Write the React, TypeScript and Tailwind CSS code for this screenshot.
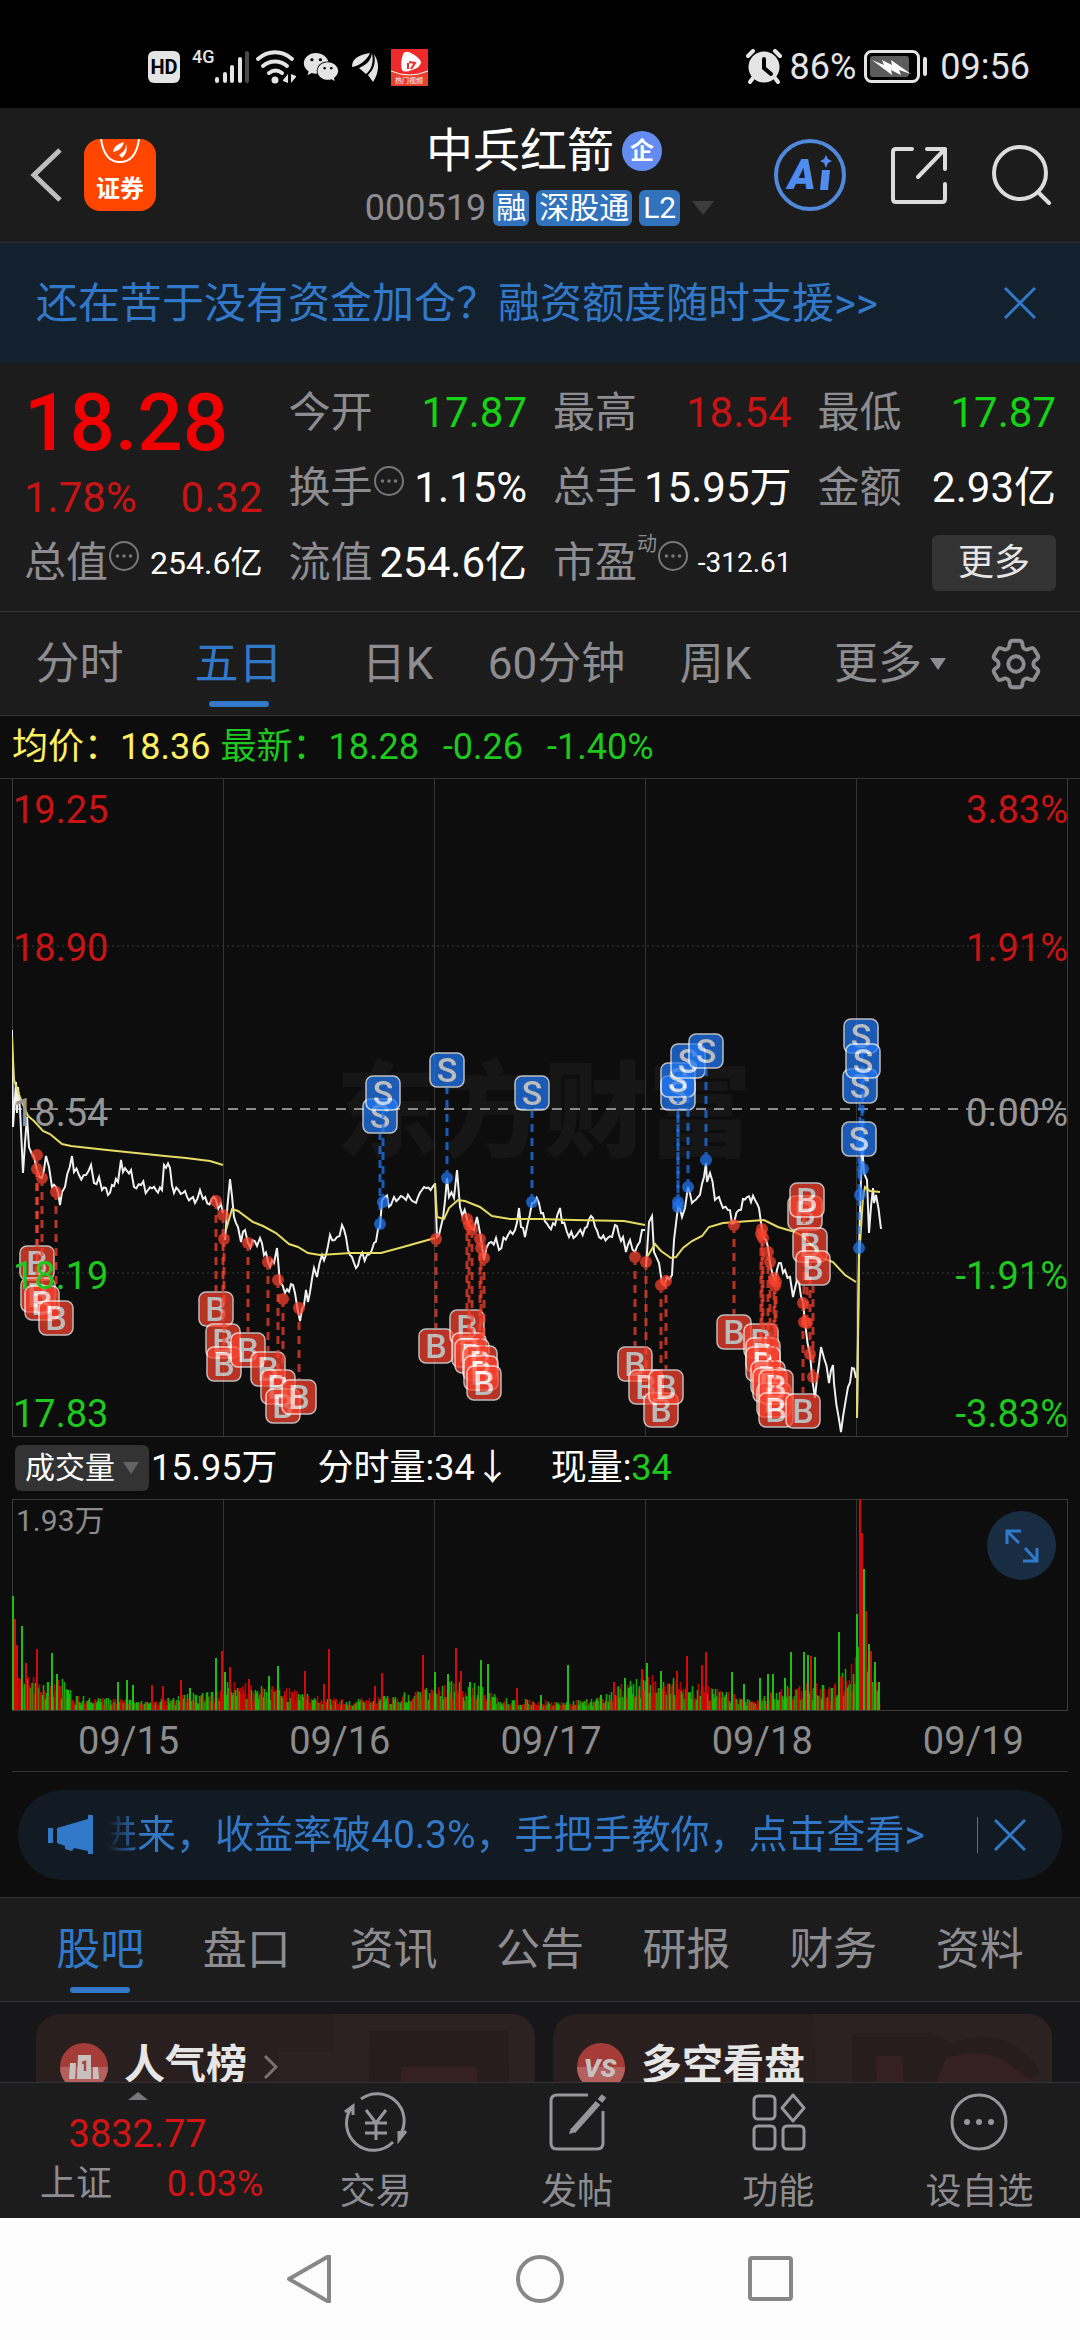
import type { ReactNode } from 'react';
import { FaWeixin } from 'react-icons/fa';
import { HiOutlineCog6Tooth } from 'react-icons/hi2';

type Point = [number, number];

const UP = '#c81414';
const DOWN = '#1ec81e';

// one array per trading day, x in 0..1056, y in 0..658
const priceDays: Point[][] = [
  [[0, 251], [1, 348], [4, 303], [5, 334], [6, 308], [8, 330], [11, 394], [15, 338], [17, 368], [22, 378], [25, 391], [30, 399], [34, 377], [37, 388], [40, 408], [46, 413], [48, 426], [50, 413], [53, 408], [60, 377], [62, 393], [67, 396], [74, 396], [79, 386], [82, 404], [87, 398], [90, 411], [96, 416], [100, 406], [106, 403], [109, 381], [111, 393], [119, 391], [122, 408], [129, 406], [136, 411], [150, 411], [152, 386], [158, 389], [162, 414], [171, 414], [183, 424], [188, 411], [191, 420], [204, 421], [211, 434]],
  [[213, 461], [218, 400], [222, 438], [226, 448], [229, 463], [233, 451], [236, 464], [245, 467], [248, 459], [256, 483], [262, 484], [265, 469], [268, 504], [273, 514], [281, 506], [283, 514], [288, 542], [294, 511], [296, 523], [302, 489], [305, 498], [310, 476], [314, 476], [318, 456], [325, 458], [330, 446], [336, 471], [344, 489], [348, 478], [355, 476], [362, 464], [368, 448], [370, 421], [373, 418], [379, 426], [382, 418], [391, 418], [394, 421], [406, 418], [412, 408], [423, 405]],
  [[423, 405], [425, 458], [431, 439], [435, 399], [437, 418], [442, 419], [445, 391], [448, 428], [455, 440], [462, 451], [465, 438], [468, 454], [472, 481], [477, 464], [484, 459], [487, 471], [496, 456], [503, 451], [507, 429], [509, 448], [513, 458], [520, 424], [527, 424], [531, 434], [537, 448], [543, 446], [548, 429], [550, 444], [557, 458], [566, 454], [573, 449], [581, 439], [587, 458], [600, 458], [603, 446], [607, 456], [611, 458], [614, 473], [618, 461], [623, 473], [630, 451], [633, 451]],
  [[634, 488], [637, 443], [640, 437], [642, 473], [647, 484], [650, 504], [655, 498], [660, 496], [662, 461], [666, 428], [670, 438], [673, 429], [676, 408], [680, 424], [686, 418], [692, 398], [694, 384], [695, 403], [698, 394], [703, 421], [707, 418], [711, 429], [716, 431], [722, 444], [727, 431], [731, 420], [743, 421], [747, 429], [750, 451], [756, 468], [758, 484], [763, 503], [767, 484], [771, 494], [773, 491], [778, 498], [781, 518], [785, 501], [791, 523], [793, 543], [798, 575], [803, 619], [809, 568], [812, 579], [817, 604], [821, 586], [822, 604], [829, 653], [836, 608], [840, 589], [844, 599]],
  [[845, 639], [847, 468], [850, 365], [852, 394], [855, 401], [857, 454], [861, 409], [862, 424], [864, 416], [869, 450]],
];

const averageDays: Point[][] = [
  [[0, 258], [2, 301], [9, 321], [16, 337], [22, 342], [31, 352], [38, 355], [50, 365], [59, 367], [95, 371], [153, 377], [174, 379], [198, 382], [211, 386]],
  [[214, 451], [220, 430], [226, 432], [241, 443], [251, 447], [264, 454], [277, 465], [286, 468], [296, 474], [308, 476], [339, 474], [369, 474], [391, 468], [423, 459]],
  [[423, 404], [425, 438], [432, 440], [437, 429], [446, 421], [453, 422], [468, 428], [480, 437], [498, 440], [528, 440], [562, 441], [612, 442], [633, 446]],
  [[635, 478], [643, 465], [649, 472], [659, 479], [664, 478], [671, 469], [680, 462], [690, 457], [697, 448], [711, 444], [752, 441], [766, 448], [783, 453], [791, 457], [804, 471], [810, 479], [821, 483], [833, 496], [844, 503]],
  [[845, 639], [847, 481], [851, 418], [853, 408], [858, 412], [868, 413]],
];

// x, y of the tag, then x, y of the trade on the line
const sells: number[][] = [
  [368, 337, 368, 445], [371, 314, 371, 423], [435, 291, 435, 399], [520, 314, 520, 423],
  [666, 314, 666, 428], [666, 301, 666, 423], [676, 282, 676, 408], [694, 272, 694, 381],
  [849, 257, 850, 365], [848, 307, 848, 416], [851, 282, 851, 390], [847, 360, 847, 469],
];

const buys: number[][] = [
  [25, 484, 25, 376], [26, 516, 25, 390], [30, 524, 30, 399], [44, 539, 44, 413],
  [204, 530, 204, 422], [211, 562, 211, 436], [212, 585, 212, 460], [236, 571, 236, 464],
  [256, 590, 256, 483], [266, 608, 266, 501], [271, 627, 271, 520], [287, 618, 287, 529],
  [424, 567, 424, 460], [455, 548, 455, 440], [457, 571, 457, 446], [460, 577, 460, 451],
  [468, 584, 468, 460], [469, 594, 469, 469], [472, 604, 472, 479],
  [623, 585, 623, 478], [634, 608, 634, 483], [649, 631, 649, 506], [654, 608, 654, 502],
  [722, 553, 722, 446], [749, 562, 750, 450], [751, 576, 749, 455], [751, 585, 751, 459],
  [756, 599, 756, 473], [758, 606, 758, 483], [762, 621, 764, 503], [764, 608, 762, 499],
  [764, 631, 763, 507], [791, 632, 791, 524], [793, 434, 795, 544], [795, 421, 792, 543],
  [798, 466, 798, 575], [801, 489, 801, 598],
];

const axisLabels = [
  { y: 30, price: '19.25', percent: '3.83%', color: UP },
  { y: 168, price: '18.90', percent: '1.91%', color: UP },
  { y: 333, price: '18.54', percent: '0.00%', color: '#969696' },
  { y: 496, price: '18.19', percent: '-1.91%', color: DOWN },
  { y: 634, price: '17.83', percent: '-3.83%', color: DOWN },
];

// x, height, 1 = up
const volumeSpikes: number[][] = [
  [1, 114, 0], [3, 91, 1], [5, 65, 1], [10, 84, 0], [14, 47, 1], [25, 61, 1], [40, 57, 0], [45, 36, 0], [56, 20, 0],
  [106, 28, 0], [115, 30, 0], [121, 25, 0], [140, 25, 1], [151, 24, 1], [169, 30, 1], [178, 22, 0], [204, 52, 0],
  [210, 59, 1], [213, 38, 0], [218, 43, 1], [237, 31, 1], [257, 34, 0], [266, 44, 0], [293, 39, 1], [312, 26, 1],
  [317, 61, 1], [363, 24, 1], [370, 37, 1], [411, 55, 1], [423, 38, 0], [436, 36, 0], [444, 62, 1], [449, 39, 1],
  [458, 28, 0], [469, 50, 0], [476, 46, 0], [505, 22, 1], [529, 15, 0], [556, 45, 0], [589, 15, 0], [602, 28, 1],
  [613, 32, 0], [630, 41, 1], [635, 47, 0], [649, 39, 0], [665, 39, 1], [675, 54, 1], [690, 45, 1], [694, 58, 1],
  [720, 38, 0], [732, 26, 0], [748, 32, 0], [756, 36, 0], [761, 36, 0], [773, 32, 0], [779, 58, 0], [792, 58, 0],
  [796, 55, 0], [799, 54, 1], [803, 53, 0], [827, 78, 0], [830, 33, 1], [845, 96, 0], [848, 211, 1], [850, 177, 1],
  [852, 141, 0], [854, 99, 1], [857, 66, 0], [859, 59, 1], [863, 48, 0], [867, 28, 0],
];

const volumeEnvelope: Point[] = [
  [0, 44], [12, 36], [50, 30], [62, 14], [100, 11], [140, 9], [200, 20], [215, 30], [240, 24], [270, 24], [300, 14], [340, 10],
  [400, 18], [430, 28], [460, 28], [490, 11], [550, 8], [590, 12], [620, 34], [640, 34], [680, 28], [720, 16], [740, 9],
  [770, 22], [800, 30], [820, 22], [845, 60], [852, 95], [860, 50], [868, 12],
];

function envelopeAt(x: number) {
  const i = volumeEnvelope.findIndex((p) => p[0] >= x);
  if (i <= 0) return volumeEnvelope[0][1];
  const [x0, y0] = volumeEnvelope[i - 1];
  const [x1, y1] = volumeEnvelope[i];
  return y0 + ((y1 - y0) * (x - x0)) / (x1 - x0);
}

function makeRandom(start: number) {
  let seed = start;
  return () => {
    seed = (seed * 1103515245 + 12345) % 2147483648;
    return seed / 2147483648;
  };
}

const random = makeRandom(19);

const volumeBars: number[][] = [];
for (let x = 0; x < 868; x += 1) {
  const height = Math.round(envelopeAt(x) * (0.3 + random() * 0.7)) + 1;
  volumeBars.push([x, height, random() > 0.5 ? 1 : 0]);
}

// adds small ticks between the key prices of a day
function pricePath(points: Point[]) {
  let d = `M${points[0][0]} ${points[0][1]}`;
  for (let i = 1; i < points.length; i += 1) {
    const [x0, y0] = points[i - 1];
    const [x1, y1] = points[i];
    const steps = Math.floor((x1 - x0) / 2);
    for (let s = 1; s < steps; s += 1) {
      const t = s / steps;
      const y = y0 + (y1 - y0) * t + (random() - 0.5) * 11;
      d += `L${(x0 + (x1 - x0) * t).toFixed(1)} ${y.toFixed(1)}`;
    }
    d += `L${x1} ${y1}`;
  }
  return d;
}

const pricePaths = priceDays.map(pricePath);
const averagePaths = averageDays.map((points) => 'M' + points.map((p) => p.join(' ')).join('L'));

function StatusBar() {
  return (
    <div className="flex h-[108px] items-center justify-between bg-black pl-[148px] pr-[50px] pt-[26px] text-[#e4e4e4]">
      <div className="flex items-center">
        <span className="flex h-8 w-8 items-center justify-center rounded-md bg-[#e4e4e4] text-xl font-bold text-black">HD</span>
        <span className="ml-3 self-start text-lg font-medium leading-4">4G</span>
        <svg className="h-9 w-9" viewBox="0 0 36 36" strokeWidth="4" strokeLinecap="round" stroke="#e4e4e4">
          <path d="M2 30v2M10 25v7M17 18v14M25 10v22" />
          <path d="M32 4v28" stroke="#4a4a4a" />
        </svg>
        <svg className="ml-1 h-9 w-11" viewBox="0 0 44 36" fill="none" stroke="#e4e4e4" strokeWidth="4" strokeLinecap="round">
          <path d="M3 10c10-9 24-9 34 0M8 17c7-6 17-6 24 0M14 24c4-3 9-3 13 0" />
          <circle cx="20" cy="31" r="3.5" fill="#e4e4e4" stroke="none" />
          <path d="M28 31l5-6v9l-5-2zM41 28l-5 6v-9l5 2z" fill="#e4e4e4" stroke="none" />
        </svg>
        <FaWeixin className="ml-1 h-9 w-9" />
        <svg className="ml-3 h-8 w-7" viewBox="0 0 28 32" fill="#e4e4e4">
          <path d="M19 2C8 4 1 7 1 16c6-1 14-5 18-14zM21 2c-1 8-6 12-13 15l7 6c5-4 8-11 6-21zM23 3c2 9 0 15-6 21l5 7c6-9 7-19 1-28z" />
        </svg>
        <svg className="ml-3 h-[37px] w-[37px]" viewBox="0 0 37 37">
          <path d="M0 0h37v37H0z" fill="#ee2a2a" />
          <path d="M0 22q18 8 37 0v15H0z" fill="#e8402c" />
          <path d="M0 22q18 8 37 0" fill="none" stroke="#fff" />
          <path d="M12 5q2-4 8-1 8 4 10 9 0 5-9 8-8 3-10 0-2-6 1-16z" fill="#fff" />
          <path d="M18 13l6 1-4 6M17 20v-6" fill="none" stroke="#ee2a2a" strokeWidth="2" />
          <text x="18" y="34" textAnchor="middle" fontSize="7" fill="#fff">热门视频</text>
        </svg>
      </div>
      <div className="flex items-center text-4xl">
        <svg className="mr-2 h-9 w-9" viewBox="0 0 36 36">
          <circle cx="18" cy="18" r="15.5" fill="#e4e4e4" />
          <path d="M2 7l5-5M34 7l-5-5M7 29l-3 4M29 29l3 4" stroke="#e4e4e4" strokeWidth="4" strokeLinecap="round" />
          <path d="M18 10v9l7 6" fill="none" stroke="#000" strokeWidth="4" strokeLinecap="round" />
        </svg>
        <span>86%</span>
        <svg className="ml-2 mr-3 h-[34px] w-16" viewBox="0 0 64 34">
          <rect x="1.5" y="1.5" width="53" height="30" rx="6" fill="none" stroke="#e4e4e4" strokeWidth="3" />
          <rect x="6" y="6" width="39" height="21" rx="3" fill="#5c5c5c" />
          <path d="M8 10l12 5-2-5 10 5-1-5 20 14-12-4 2 5-10-5 1 5z" fill="#fff" />
          <path d="M61 9v15" stroke="#e4e4e4" strokeWidth="4" strokeLinecap="round" />
        </svg>
        <span>09:56</span>
      </div>
    </div>
  );
}

function Header() {
  return (
    <header className="flex h-[135px] items-center border-b border-[#303032] bg-[#1c1c1c] pl-7 pr-7">
      <div className="flex flex-1 items-center gap-5">
        <button aria-label="返回">
          <svg className="h-14 w-9" viewBox="0 0 36 56" fill="none" stroke="#bebebe" strokeWidth="5">
            <path d="M32 3L6 28l26 25" />
          </svg>
        </button>
        <a href="#trade" className="flex h-[72px] w-[72px] flex-col items-center rounded-2xl bg-[#ff4600] font-['Noto_Sans_CJK_SC',sans-serif] text-2xl font-bold leading-8 text-white">
          <svg className="h-8 w-12" viewBox="0 0 48 32" fill="none" stroke="#fff" strokeWidth="2">
            <path d="M5 0c2 14 8 23 19 23S41 14 43 0" />
            <path d="M28 3c-6 2-10 4-11 10 5-1 9-3 11-10zM30 5c0 6-3 8-7 11l3 3c4-4 6-8 4-14z" fill="#fff" stroke="none" />
          </svg>
          证券
        </a>
      </div>
      <div className="flex flex-col items-center">
        <div className="flex items-center gap-2 pl-2">
          <h1 className="text-[47px] font-normal leading-[54px] text-white">中兵红箭</h1>
          <span className="flex h-10 w-10 items-center justify-center rounded-full bg-[#648cf0] text-2xl font-bold text-white">企</span>
        </div>
        <div className="mt-3 flex items-center gap-[7px] text-3xl leading-9 text-white">
          <span className="text-4xl leading-9 text-[#8c8c91]">000519</span>
          <span className="rounded-md bg-[#3273be] px-[3px]">融</span>
          <span className="rounded-md bg-[#3273be] px-[3px]">深股通</span>
          <span className="rounded-md bg-[#3273be] px-1">L2</span>
          <svg className="ml-1 h-4 w-6" viewBox="0 0 24 16"><path d="M1 1h22L12 15z" fill="#3c3c3c" /></svg>
        </div>
      </div>
      <div className="flex flex-1 items-center justify-end gap-[44px]">
        <button aria-label="Ai">
          <svg className="h-[72px] w-[72px]" viewBox="0 0 72 72">
            <circle cx="36" cy="36" r="34" fill="none" stroke="#5088dc" strokeWidth="4" />
            <text x="14" y="50" fontSize="42" fontWeight="900" fontStyle="italic" fill="#508cf0">A</text>
            <path d="M48 31h8l-2 20h-8z" fill="#508cf0" />
            <path d="M52 16l2 4 4 2-4 2-2 5-2-5-4-2 4-2z" fill="#508cf0" />
          </svg>
        </button>
        <button aria-label="分享">
          <svg className="h-[58px] w-[58px]" viewBox="0 0 58 58" fill="none" stroke="#dcdcdc" strokeWidth="4" strokeLinecap="round" strokeLinejoin="round">
            <path d="M22 3H6q-3 0-3 3v47q0 3 3 3h46q3 0 3-3V38M37 3h18v20M55 3L28 31" />
          </svg>
        </button>
        <button aria-label="搜索">
          <svg className="h-[60px] w-[60px]" viewBox="0 0 60 60" fill="none" stroke="#dcdcdc" strokeWidth="4" strokeLinecap="round">
            <circle cx="28" cy="28" r="26" />
            <path d="M46 47l11 11" />
          </svg>
        </button>
      </div>
    </header>
  );
}

function CloseIcon() {
  return (
    <svg className="h-8 w-8" viewBox="0 0 32 32" stroke="#3278c8" strokeWidth="3">
      <path d="M1 1l30 30M31 1L1 31" />
    </svg>
  );
}

function InfoDots() {
  return (
    <svg className="mt-1 h-8 w-8 shrink-0 self-start" viewBox="0 0 32 32" fill="#77777a">
      <circle cx="16" cy="16" r="14" fill="none" stroke="#77777a" strokeWidth="2" />
      <circle cx="9.5" cy="16" r="1.8" />
      <circle cx="16" cy="16" r="1.8" />
      <circle cx="22.5" cy="16" r="1.8" />
    </svg>
  );
}

interface QuoteProps {
  label: ReactNode;
  value: string;
  className?: string;
}

function Quote({ label, value, className = 'text-[42px] text-white' }: QuoteProps) {
  return (
    <div className="flex h-[75px] items-center justify-between whitespace-nowrap">
      <span className="flex items-center text-[#8c8c91]">{label}</span>
      <span className={className}>{value}</span>
    </div>
  );
}

function Quotes() {
  return (
    <section className="grid grid-cols-4 gap-x-[26px] border-b border-[#333335] bg-[#1c1c1c] px-6 pb-[11px] pt-3 text-[42px] leading-[54px]">
      <div className="row-span-2 flex flex-col">
        <strong className="text-[80px] font-medium leading-[96px] text-[#f00000]">18.28</strong>
        <div className="flex justify-between text-[#c81414]">
          <span>1.78%</span>
          <span>0.32</span>
        </div>
      </div>
      <Quote label="今开" value="17.87" className="text-[#14d214]" />
      <Quote label="最高" value="18.54" className="text-[#c81414]" />
      <Quote label="最低" value="17.87" className="text-[#14d214]" />
      <Quote label={<>换手<InfoDots /></>} value="1.15%" />
      <Quote label="总手" value="15.95万" />
      <Quote label="金额" value="2.93亿" />
      <Quote label={<>总值<InfoDots /></>} value="254.6亿" className="text-[32px] text-white" />
      <Quote label="流值" value="254.6亿" />
      <Quote
        label={<>市盈<sup className="top-0 self-start text-xl leading-4">动</sup><InfoDots /></>}
        value="-312.61"
        className="text-[28px] text-white"
      />
      <div className="flex h-[75px] items-center justify-end">
        <button className="h-14 w-[124px] rounded-md bg-[#333333] text-4xl text-[#e6e6e6]">更多</button>
      </div>
    </section>
  );
}

function PeriodTabs() {
  return (
    <nav className="grid h-[104px] grid-cols-[repeat(5,159fr)_190fr_95fr] items-center border-b border-[#333335] bg-[#1c1c1c] text-[44px] text-[#8c8c91]">
      <button>分时</button>
      <button className="relative h-full text-[#3278c8]">
        五日
        <span className="absolute bottom-2 left-1/2 h-[6px] w-[60px] -translate-x-1/2 rounded-full bg-[#3278c8]" />
      </button>
      <button>日K</button>
      <button className="whitespace-nowrap">60分钟</button>
      <button>周K</button>
      <button className="flex items-center justify-center gap-2">
        更多
        <svg className="h-3 w-4" viewBox="0 0 16 12"><path d="M0 0h16L8 12z" fill="#8c8c91" /></svg>
      </button>
      <button aria-label="设置"><HiOutlineCog6Tooth className="h-[62px] w-[62px]" /></button>
    </nav>
  );
}

interface MarkerProps {
  letter: string;
  color: string;
  at: number[];
}

function Marker({ letter, color, at }: MarkerProps) {
  const [x, y, dotX, dotY] = at;
  const edge = y > dotY ? y - 18 : y + 18;
  return (
    <g opacity="0.72">
      <path d={`M${dotX} ${dotY}V${edge}`} stroke={color} strokeWidth="3" strokeDasharray="8 6" />
      <circle cx={dotX} cy={dotY} r="6" fill={color} />
      <rect x={x - 17} y={y - 17} width="34" height="34" rx="7" fill={color} stroke="#fff" strokeWidth="1.5" />
      <text x={x} y={y + 12} textAnchor="middle" fontSize="34" fontWeight="500" fill="#fff">{letter}</text>
    </g>
  );
}

function PriceChart() {
  return (
    <svg className="block h-auto w-full" viewBox="0 0 1056 658" fill="none">
      <text x="532" y="370" textAnchor="middle" fontSize="104" fontWeight="900" fill="#161616">东方财富</text>
      <path d="M211.5 0v658M422.5 0v658M633.5 0v658M844.5 0v658" stroke="#343434" />
      <path d="M0.5 0v657.5h1055V0" stroke="#3c3c3c" />
      <path d="M0 167h1056M0 494h1056" stroke="#3c3c3c" strokeDasharray="2 3" />
      <path d="M0 330h1056" stroke="#8c8c8c" strokeWidth="2" strokeDasharray="10 8" />
      {pricePaths.map((d, i) => <path key={i} d={d} stroke="#f0f0f0" strokeWidth="2" />)}
      {averagePaths.map((d, i) => <path key={i} d={d} stroke="#e6dc64" strokeWidth="2" />)}
      {sells.map((at, i) => <Marker key={i} letter="S" color="#2178f5" at={at} />)}
      {buys.map((at, i) => <Marker key={i} letter="B" color="#fa422d" at={at} />)}
      {axisLabels.map((label) => (
        <g key={label.y} fontSize="38" fill={label.color}>
          <text x="1" y={label.y + 14}>{label.price}</text>
          <text x="1056" y={label.y + 14} textAnchor="end">{label.percent}</text>
        </g>
      ))}
    </svg>
  );
}

function VolumeChart() {
  return (
    <div className="relative">
      <svg className="block h-auto w-full" viewBox="0 0 1056 212" fill="none">
        <path d="M211.5 0v211M422.5 0v211M633.5 0v211M844.5 0v211" stroke="#343434" />
        <rect x="0.5" y="0.5" width="1055" height="211" stroke="#3c3c3c" />
        {volumeBars.map(([x, height, up], i) => (
          <path key={i} d={`M${x + 0.5} 211v-${height}`} stroke={up ? '#e10500' : '#14d20a'} strokeOpacity="0.8" strokeWidth="1.6" />
        ))}
        {volumeSpikes.map(([x, height, up], i) => (
          <path key={i} d={`M${x} 211v-${height}`} stroke={up ? '#d20a0a' : '#1ebe14'} strokeWidth="2" />
        ))}
        <text x="4" y="32" fontSize="30" fill="#8c8c8c">1.93万</text>
      </svg>
      <button aria-label="全屏" className="absolute right-3 top-3 flex h-[69px] w-[69px] items-center justify-center rounded-full bg-[#182c42]">
        <svg className="h-9 w-9" viewBox="0 0 36 36" fill="none" stroke="#3278c8" strokeWidth="3">
          <path d="M3 16V3h14M4 4l11 11M33 20v13H19M32 32L21 20" />
        </svg>
      </button>
    </div>
  );
}

function Charts() {
  return (
    <section className="bg-[#0d0d0d]">
      <div className="flex h-[63px] items-center gap-[10px] whitespace-nowrap border-b border-[#333335] px-3 text-4xl">
        <span className="text-[#fff064]">均价：18.36</span>
        <span className="flex gap-6 text-[#1ec81e]">
          <span>最新：18.28</span>
          <span>-0.26</span>
          <span>-1.40%</span>
        </span>
      </div>
      <div className="px-3">
        <PriceChart />
        <div className="flex h-[62px] items-center whitespace-nowrap pl-[3px] text-4xl text-white">
          <button className="flex h-[46px] items-center gap-2 rounded-md bg-[#333333] px-[10px] text-3xl">
            成交量
            <svg className="h-3 w-4" viewBox="0 0 16 12"><path d="M0 0h16L8 12z" fill="#646464" /></svg>
          </button>
          <span className="ml-[2px]">15.95万</span>
          <span className="ml-10">分时量:34↓</span>
          <span className="ml-10">现量:<span className="text-[#1ec81e]">34</span></span>
        </div>
        <VolumeChart />
        <div className="grid h-[61px] grid-cols-5 items-center border-b border-[#333335] text-center text-[38px] text-[#8c8c8c]">
          {['09/15', '09/16', '09/17', '09/18', '09/19'].map((date) => (
            <span key={date} className="pl-[22px]">{date}</span>
          ))}
        </div>
      </div>
      <div className="px-[18px] pb-[17px] pt-[18px]">
        <div className="flex h-[90px] items-center rounded-full bg-[#121a24] pl-[30px] pr-9 text-[#3278c8]">
          <svg className="h-10 w-[46px] shrink-0" viewBox="0 0 46 40" fill="#3278c8">
            <path d="M0 13h5v15H0zM9 13l31-9V0h5v39h-5v-3l-14-3-2 3-7-2v-3l-8-3z" />
          </svg>
          <a href="#promo" className="ml-3 flex min-w-0 flex-1 justify-end overflow-hidden whitespace-nowrap pr-[52px] text-[39px] leading-[54px] [mask-image:linear-gradient(to_right,transparent,black_36px)]">
            进来，收益率破40.3%，手把手教你，点击查看&gt;
          </a>
          <span className="mr-4 h-9 w-px bg-[#3278c8]" />
          <button aria-label="关闭"><CloseIcon /></button>
        </div>
      </div>
    </section>
  );
}

function InfoTabs() {
  const tabs = ['股吧', '盘口', '资讯', '公告', '研报', '财务', '资料'];
  return (
    <nav className="grid h-[105px] grid-cols-7 border-y border-[#333335] bg-[#1c1c1c] px-[27px] text-[44px] text-[#8c8c91]">
      {tabs.map((tab, i) => (
        <button key={tab} className={i === 0 ? 'relative text-[#3278c8]' : ''}>
          {tab}
          {i === 0 && <span className="absolute bottom-2 left-1/2 h-[6px] w-[60px] -translate-x-1/2 rounded-full bg-[#3278c8]" />}
        </button>
      ))}
    </nav>
  );
}

function Cards() {
  return (
    <section className="grid grid-cols-2 gap-[18px] bg-[#17171a] pl-9 pr-7 pt-3 text-[41px] font-bold text-[#e6e6e6]">
      <a href="#rank" className="relative h-[200px] overflow-hidden rounded-3xl bg-[#281f1e]">
        <svg className="absolute right-0 top-0 h-full w-[256px]" viewBox="0 0 256 200" aria-hidden="true">
          <path d="M54 0h202v200H0V38h54z" fill="#2c2221" />
          <path d="M91 17h138l4 183H88z" fill="#271d1d" />
          <path d="M122 53h76v147h-76z" fill="#342120" />
        </svg>
        <div className="relative flex items-center gap-4 px-6 pt-6">
          <svg className="mt-1 h-12 w-12" viewBox="0 0 48 48">
            <circle cx="24" cy="24" r="24" fill="#a53c38" />
            <path d="M0 24a24 24 0 0 0 48 0z" fill="#b4605c" />
            <path d="M10 20h6l-1 16H9zM18 12h13v24H17zM33 24h5l1 12h-6z" fill="#c8c0bf" />
            <path d="M22 20l3-1v9" fill="none" stroke="#a04844" strokeWidth="2.5" />
          </svg>
          <span className="leading-[54px]">人气榜</span>
          <svg className="mt-1 h-6 w-4" viewBox="0 0 16 24" fill="none" stroke="#787070" strokeWidth="3"><path d="M2 1l11 11L2 23" /></svg>
        </div>
      </a>
      <a href="#watch" className="relative h-[200px] overflow-hidden rounded-3xl bg-[#281f1e]">
        <svg className="absolute right-0 top-0 h-full w-[240px]" viewBox="0 0 240 200" aria-hidden="true">
          <path d="M0 0h240v200H12z" fill="#2c2221" />
          <path d="M40 19h80l20 10q60-20 88 30l-40 22-24-12-18 40-106 20z" fill="#271d1d" />
          <path d="M64 42h26l4 60H66zM134 44q34-10 58 2l26 20-18 12-40-6-10 28-36-4z" fill="#342120" />
        </svg>
        <div className="relative flex items-center gap-4 px-6 pt-6">
          <svg className="mt-1 h-12 w-12" viewBox="0 0 48 48">
            <circle cx="24" cy="24" r="24" fill="#a53c38" />
            <path d="M0 24a24 24 0 0 0 48 0z" fill="#b4605c" />
            <text x="23" y="34" textAnchor="middle" fontSize="26" fontWeight="900" fontStyle="italic" fill="#c8c0bf">VS</text>
          </svg>
          <span className="leading-[54px]">多空看盘</span>
        </div>
      </a>
    </section>
  );
}

interface ActionProps {
  label: string;
  children: ReactNode;
}

function Action({ label, children }: ActionProps) {
  return (
    <button className="flex flex-col items-center gap-4 text-4xl leading-[48px]">
      <svg className="h-[60px] w-[66px]" viewBox="0 0 66 60" fill="none" stroke="#96969b" strokeWidth="3">
        {children}
      </svg>
      {label}
    </button>
  );
}

function BottomBar() {
  return (
    <footer className="grid grid-cols-[275fr_repeat(4,201fr)] border-t border-[#333335] bg-[#1c1c1c] pb-[2px] pt-[9px] text-[#8c8c91]">
      <button className="flex flex-col items-center text-[#d21414]">
        <svg className="h-2 w-5" viewBox="0 0 20 8"><path d="M0 8L10 0l10 8z" fill="#77777a" /></svg>
        <span className="mt-2 text-[38px] leading-[52px]">3832.77</span>
        <span className="flex w-full justify-between pl-10 pr-3 text-4xl leading-[48px]">
          <span className="text-[#8c8c91]">上证</span>
          <span>0.03%</span>
        </span>
      </button>
      <Action label="交易">
        <path d="M18 7A27 27 0 0 1 57 43M63 39l-7 9v-9M50 50A27 27 0 0 1 9 15M2 20l8-6v9" />
        <path d="M23 18l10 13 10-13M22 31h22M22 41h22M33 31v17" />
      </Action>
      <Action label="发帖">
        <path d="M44 3H13q-6 0-6 6v42q0 6 6 6h40q6 0 6-6V19" />
        <path d="M54 11l-25 28" strokeWidth="6" />
        <path d="M56 9l4-5" strokeWidth="6" />
        <path d="M25 42l2-6 5 4z" fill="#96969b" stroke="none" />
      </Action>
      <Action label="功能">
        <rect x="9" y="4" width="21" height="23" rx="4" />
        <rect x="9" y="34" width="21" height="23" rx="4" />
        <rect x="38" y="34" width="21" height="23" rx="4" />
        <path d="M48 3l11 13-11 13-11-13z" strokeLinejoin="round" />
      </Action>
      <Action label="设自选">
        <circle cx="33" cy="30" r="27" />
        <g fill="#96969b" stroke="none">
          <circle cx="21" cy="30" r="3" />
          <circle cx="33" cy="30" r="3" />
          <circle cx="45" cy="30" r="3" />
        </g>
      </Action>
    </footer>
  );
}

function SystemNav() {
  return (
    <div className="flex h-[122px] items-center justify-center gap-[182px] bg-[#fcfcfc]">
      <button aria-label="后退">
        <svg className="h-12 w-12" viewBox="0 0 48 48" fill="none" stroke="#878787" strokeWidth="4" strokeLinejoin="round"><path d="M44 1v46L4 24z" /></svg>
      </button>
      <button aria-label="主屏幕">
        <svg className="h-[50px] w-[50px]" viewBox="0 0 50 50" fill="none" stroke="#878787" strokeWidth="4"><circle cx="25" cy="25" r="22" /></svg>
      </button>
      <button aria-label="最近任务">
        <svg className="h-12 w-12" viewBox="0 0 48 48" fill="none" stroke="#878787" strokeWidth="4"><rect x="3" y="3" width="41" height="41" rx="2" /></svg>
      </button>
    </div>
  );
}

export default function App() {
  return (
    <div className="flex h-screen flex-col bg-[#17171a] font-[Roboto,'Noto_Sans_CJK_SC',sans-serif]">
      <StatusBar />
      <Header />
      <main className="min-h-0 flex-1 overflow-hidden">
        <div className="flex h-[120px] items-center justify-between bg-[#13202e] pl-9 pr-11 text-[42px] text-[#3278c8]">
          <a href="#margin" className="whitespace-nowrap">还在苦于没有资金加仓？融资额度随时支援&gt;&gt;</a>
          <button aria-label="关闭"><CloseIcon /></button>
        </div>
        <Quotes />
        <PeriodTabs />
        <Charts />
        <InfoTabs />
        <Cards />
      </main>
      <BottomBar />
      <SystemNav />
    </div>
  );
}
